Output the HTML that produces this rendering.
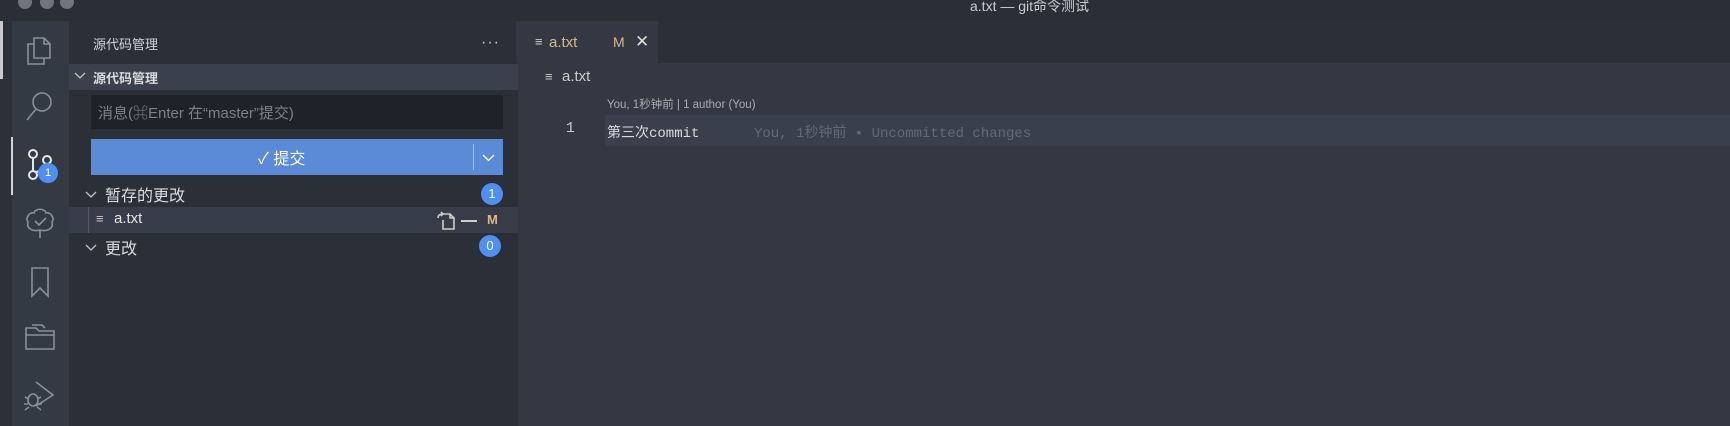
<!DOCTYPE html>
<html><head><meta charset="utf-8"><style>
*{margin:0;padding:0;box-sizing:border-box}
body{width:1730px;height:426px;overflow:hidden;background:#2b2f37;font-family:"Liberation Sans","Noto Sans CJK SC",sans-serif;color:#ccd;position:relative}
.abs{position:absolute}
.title{left:0;top:0;width:1730px;height:21px;background:#2a2e36}
.dot{width:14px;height:14px;border-radius:50%;background:#70747c;top:-5px}
.act{left:0;top:21px;width:69px;height:405px;background:#343a44}
.side{left:69px;top:21px;width:449px;height:405px;background:#2b2f37}
.ed{left:518px;top:63px;width:1212px;height:363px;background:#333842}
.tabbar{left:518px;top:21px;width:1212px;height:42px;background:#2b2f37}
.tab{left:516px;top:21px;width:142px;height:42px;background:#333842}
svg{position:absolute;fill:none;stroke:#8a9099;stroke-width:1.6}
svg.ch{stroke:#c0c4ca;stroke-width:1.3}
.t{position:absolute;white-space:nowrap}
.badge{position:absolute;width:22px;height:22px;border-radius:50%;background:#4f8ff0;color:#fff;font-size:13px;text-align:center;line-height:22px}
.mono{font-family:'Liberation Mono','Noto Sans CJK SC',monospace}
</style></head><body>
<div class="abs title"></div>
<div class="abs dot" style="left:18px"></div><div class="abs dot" style="left:40px"></div><div class="abs dot" style="left:60px"></div>
<div class="t" style="left:970px;top:-4px;font-size:14px;color:#c8ccd2">a.txt — git命令测试</div>
<div class="abs act"></div>
<div class="abs" style="left:0;top:21px;width:12px;height:405px;background:#2c3038"></div>
<div class="abs" style="left:0;top:21px;width:3px;height:58px;background:#c8ccd2"></div>
<div class="abs" style="left:11px;top:137px;width:2px;height:58px;background:#d0d4da"></div>
<svg style="left:24px;top:32px" width="32" height="34" viewBox="0 0 32 34"><path d="M10 6h10l6 6v14H10z M20 6v6h6 M10 12H4v20h16v-6"/></svg>
<svg style="left:24px;top:90px" width="32" height="34" viewBox="0 0 32 34"><circle cx="18" cy="12" r="9"/><path d="M12 19L3 30"/></svg>
<svg style="left:24px;top:148px" width="36" height="38" viewBox="0 0 36 38"><g style="stroke:#e4e6ea;stroke-width:2"><circle cx="9" cy="6" r="4"/><circle cx="23" cy="12" r="4"/><circle cx="9" cy="27" r="4"/><path d="M9 10v13 M23 16c0 6-8 6-12 9"/></g></svg>
<div class="badge" style="left:38px;top:163px;width:20px;height:20px;line-height:20px;font-size:11px">1</div>
<svg style="left:24px;top:206px" width="32" height="34" viewBox="0 0 32 34"><path d="M16 32v-8 M16 24c-8 2-14-2-12-8-3-5 2-10 6-9 1-5 11-5 12 0 4-1 9 4 6 9 2 6-4 10-12 8 M11 15l4 4 7-7"/></svg>
<svg style="left:24px;top:265px" width="32" height="34" viewBox="0 0 32 34"><path d="M8 3h16v28l-8-8-8 8z"/></svg>
<svg style="left:24px;top:322px" width="34" height="30" viewBox="0 0 34 30"><path d="M2 6h10l3 3h15v18H2z M2 13h28 M8 3h10l3 3"/></svg>
<svg style="left:22px;top:380px" width="36" height="34" viewBox="0 0 36 34"><path d="M14 2l17 13-17 11 M6 20a5 6 0 1 0 10 0a5 6 0 1 0-10 0 M2 24h4 M16 24h4 M3 30l4-3 M19 30l-4-3 M3 17l4 2 M19 17l-4 2"/></svg>
<div class="abs side"></div>
<div class="t" style="left:93px;top:34px;font-size:13px;color:#d0d4da">源代码管理</div>
<div class="t" style="left:481px;top:34px;font-size:16px;color:#ccc;letter-spacing:1px">···</div>
<div class="abs" style="left:69px;top:64px;width:449px;height:26px;background:#3b414c"></div>
<svg class="ch" style="left:74px;top:72px" width="12" height="8" viewBox="0 0 12 8"><path d="M1 1l5 5 5-5"/></svg>
<div class="t" style="left:93px;top:68px;font-size:13px;font-weight:bold;color:#d8dbe0">源代码管理</div>
<div class="abs" style="left:91px;top:95px;width:412px;height:34px;background:#1f2228"></div>
<div class="t" style="left:98px;top:102px;font-size:15px;color:#7c828b">消息(⌘Enter 在“master”提交)</div>
<div class="abs" style="left:91px;top:139px;width:412px;height:36px;background:#5b8ad6"></div>
<div class="abs" style="left:473px;top:144px;width:1px;height:26px;background:#a8c0e8"></div>
<div class="t" style="left:258px;top:145px;font-size:16px;color:#fff">✓ 提交</div>
<svg class="ch" style="left:482px;top:154px;stroke:#fff" width="13" height="8" viewBox="0 0 13 8"><path d="M1 1l5.5 5.5 5.5-5.5"/></svg>
<svg class="ch" style="left:85px;top:191px" width="12" height="8" viewBox="0 0 12 8"><path d="M1 1l5 5 5-5"/></svg>
<div class="t" style="left:105px;top:182px;font-size:16px;color:#d8dbe0">暂存的更改</div>
<div class="badge" style="left:481px;top:183px">1</div>
<div class="abs" style="left:69px;top:207px;width:449px;height:26px;background:#373d48"></div>
<div class="abs" style="left:88px;top:207px;width:1px;height:26px;background:#555b66"></div>
<div class="t" style="left:96px;top:211px;font-size:13px;color:#ccc">≡</div>
<div class="t" style="left:114px;top:210px;font-size:15px;color:#e4e6ea">a.txt</div>
<svg style="left:436px;top:211px" width="20" height="20" viewBox="0 0 20 20"><path style="stroke:#ccc" d="M7 3h7l4 4v11H7V9 M14 3v4h4 M2 7c0-3 2-4 5-4 M5 1l2 2-2 2"/></svg>
<div class="abs" style="left:461px;top:220px;width:16px;height:1.5px;background:#ccc"></div>
<div class="t" style="left:487px;top:212px;font-size:13px;font-weight:bold;color:#d9b98a">M</div>
<svg class="ch" style="left:85px;top:244px" width="12" height="8" viewBox="0 0 12 8"><path d="M1 1l5 5 5-5"/></svg>
<div class="t" style="left:105px;top:235px;font-size:16px;color:#d8dbe0">更改</div>
<div class="badge" style="left:479px;top:235px">0</div>
<div class="abs tabbar"></div>
<div class="abs tab"></div>
<div class="t" style="left:535px;top:34px;font-size:13px;color:#ccc">≡</div>
<div class="t" style="left:549px;top:34px;font-size:15px;color:#d9b98a">a.txt</div>
<div class="t" style="left:613px;top:34px;font-size:14px;color:#d9b98a">M</div>
<div class="t" style="left:635px;top:32px;font-size:17px;color:#ddd">✕</div>
<div class="abs ed"></div>
<div class="t" style="left:545px;top:69px;font-size:13px;color:#ccc">≡</div>
<div class="t" style="left:562px;top:68px;font-size:15px;color:#c8ccd2">a.txt</div>
<div class="t" style="left:607px;top:96px;font-size:11.5px;color:#a8adb5">You, 1秒钟前 | 1 author (You)</div>
<div class="abs" style="left:605px;top:115px;width:1125px;height:31px;background:#3a404b"></div>
<div class="t mono" style="left:566px;top:121px;font-size:14.5px;color:#c8ccd2">1</div>
<div class="t mono" style="left:607px;top:122px;font-size:14px;color:#d8dbe0">第三次commit</div>
<div class="t mono" style="left:754px;top:122px;font-size:14px;color:#646a74">You, 1秒钟前 • Uncommitted changes</div>
</body></html>
